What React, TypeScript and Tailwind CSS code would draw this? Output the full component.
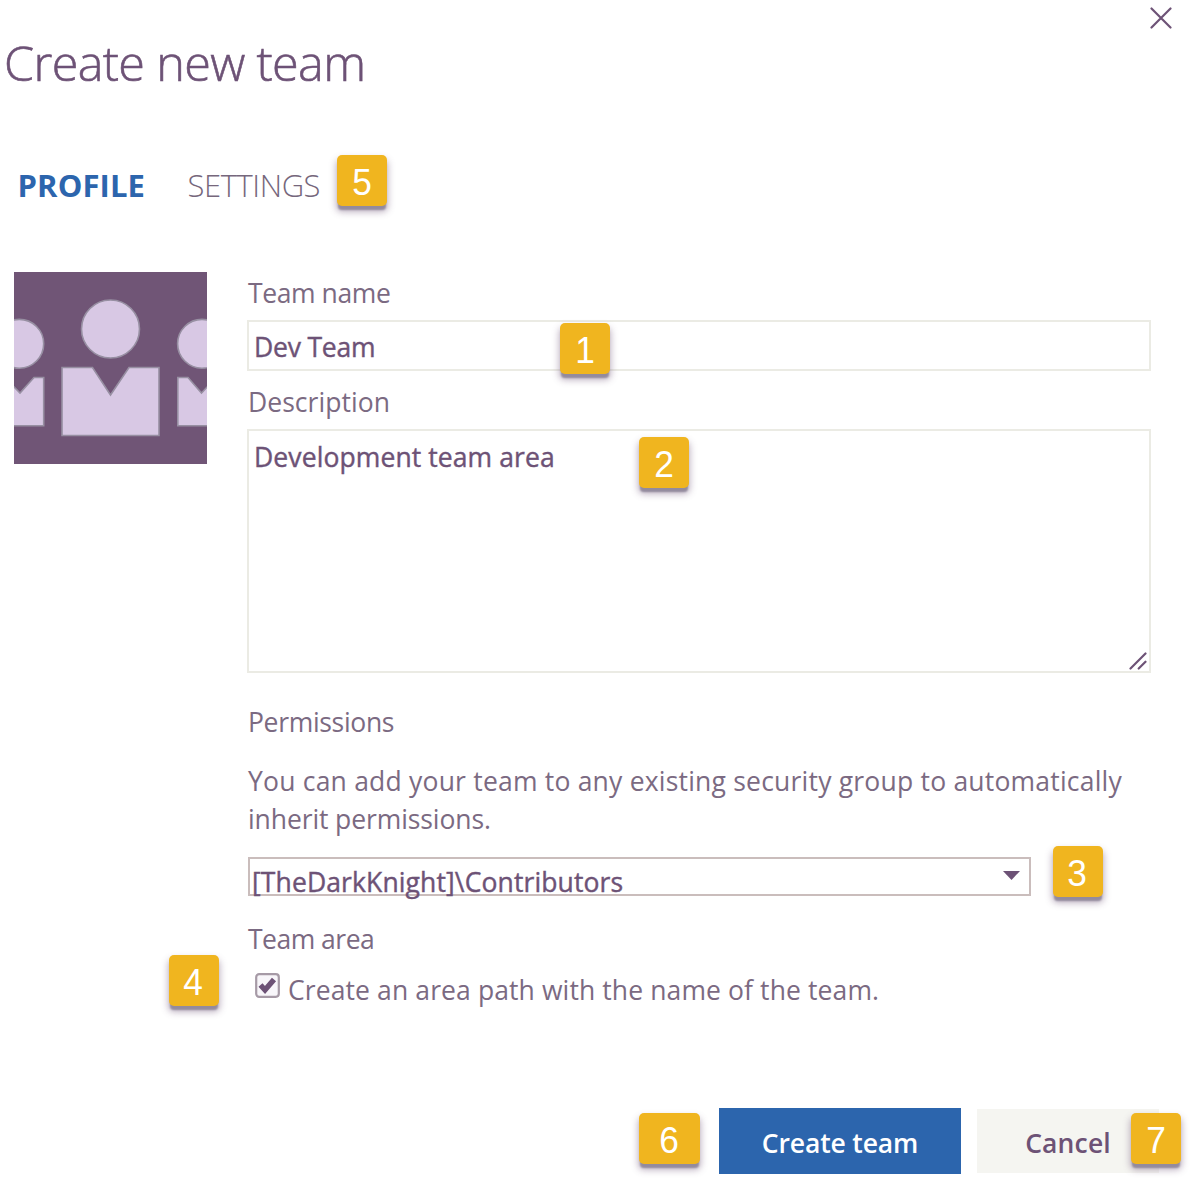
import type { ReactNode } from "react";

function Badge({ n, className }: { n: number; className: string }) {
  return (
    <span
      className={`flex h-[51px] items-center justify-center rounded-[5px] bg-[#f0b51f] font-['Liberation_Sans',sans-serif] text-[36px] leading-[51px] text-white shadow-[0_5px_2px_-1px_#938b9d,0_5px_7px_1px_rgba(112,86,122,0.45)] ${className}`}
    >
      <span className="translate-y-[2px] scale-x-[0.98]">{n}</span>
    </span>
  );
}

function Label({ children, className }: { children: ReactNode; className: string }) {
  return <div className={`h-[40px] whitespace-nowrap leading-[42px] ${className}`}>{children}</div>;
}

function TeamAvatar() {
  return (
    <svg width="193" height="192" viewBox="14 272 193 192" className="shrink-0 bg-[#705576]">
      <g fill="#d8c8e4" stroke="#978fa2" strokeWidth="1.6">
        <circle cx="110.5" cy="329" r="29" />
        <path d="M62 367.5H92.5L110.5 395L129 367.5H159V435.5H62Z" />
        <circle cx="19.3" cy="343.8" r="24.4" />
        <path d="M5 377.5L20 393L34 377.5H43.7V425.7H5Z" />
        <circle cx="202" cy="343.8" r="24.4" />
        <path d="M177.8 377.5H188L201.5 393L216 377.5V425.7H177.8Z" />
      </g>
    </svg>
  );
}

export default function App() {
  return (
    <main className="h-[1192px] w-[1200px] overflow-hidden bg-white font-['Open_Sans',sans-serif] text-[26.5px] text-[#7b6a82]">
      <header className="flex h-[155px] justify-between">
        <h1 className="whitespace-nowrap pl-[4px] pt-[32px] text-[48.5px] font-light leading-[60px] tracking-[-0.65px] text-[#6d5276] [-webkit-text-stroke:0.6px_#6d5276]">
          Create new team
        </h1>
        <svg width="22" height="22" viewBox="0 0 22 22" className="mr-[28px] mt-[7px]" stroke="#6d5276" strokeWidth="2.2" strokeLinecap="round">
          <path d="M1.5 1.5L20.5 20.5M20.5 1.5L1.5 20.5" />
        </svg>
      </header>

      <nav className="flex h-[117px] items-start text-[31px] leading-[40px]">
        <span className="mt-[10px] w-[170px] pl-[17.5px] font-bold tracking-[0.1px] text-[#2c65ad]">PROFILE</span>
        <span className="mt-[10px] w-[167px] pl-[17.5px] font-light tracking-[-0.43px] text-[#76677c]">SETTINGS</span>
        <Badge n={5} className="w-[50px]" />
      </nav>

      <section className="flex pl-[14px]">
        <TeamAvatar />
        <div className="ml-[40px] w-[904px]">
          <Label className="pl-px tracking-[-0.4px]">Team name</Label>
          <div className="relative mt-[8px] h-[51px] border-2 border-[#ebebe4] pl-[5px] leading-[51px] tracking-[-0.2px] text-[#6d5276] [-webkit-text-stroke:0.4px_#6d5276]">
            Dev Team
            <Badge n={1} className="absolute left-[311px] top-px w-[50px] [-webkit-text-stroke:0]" />
          </div>
          <Label className="mt-[10px] pl-px tracking-[0.04px]">Description</Label>
          <div className="relative mt-[8px] h-[244px] border-2 border-[#ebebe4] pl-[5px] pt-[6px] leading-[40px] tracking-[0.1px] text-[#6d5276] [-webkit-text-stroke:0.4px_#6d5276]">
            Development team area
            <Badge n={2} className="absolute left-[390px] top-[6px] w-[50px] [-webkit-text-stroke:0]" />
            <svg width="18" height="18" viewBox="0 0 18 18" className="absolute bottom-px right-[2px]" stroke="#6d5276" strokeWidth="2.2" strokeLinecap="round">
              <path d="M1.5 16.5L16.5 1.5M9.7 16.5L16.5 9.7" />
            </svg>
          </div>

          <Label className="mt-[28px] pl-px tracking-[-0.32px]">Permissions</Label>
          <p className="mt-[19px] h-[78px] whitespace-nowrap pt-[2px] leading-[38px]">
            <span className="block pl-px tracking-[0.21px]">You can add your team to any existing security group to automatically</span>
            <span className="block pl-px tracking-[-0.1px]">inherit permissions.</span>
          </p>
          <div className="mt-[19px] flex">
            <div className="ml-px flex h-[39px] w-[783px] justify-between border-2 border-[#cabdbc] pl-[2px] leading-[47px] tracking-[0.12px] text-[#6d5276]">
              <span className="[-webkit-text-stroke:0.4px_#6d5276]">[TheDarkKnight]\Contributors</span>
              <svg width="17" height="9" viewBox="0 0 17 9" className="mr-[9px] mt-[12px]" fill="#6d5276">
                <path d="M0 0H17L8.5 9Z" />
              </svg>
            </div>
            <Badge n={3} className="-mb-px -mt-[11px] ml-[21.5px] w-[50px]" />
          </div>
          <Label className="mt-[22px] pl-px tracking-[-0.5px]">Team area</Label>
          <div className="relative mt-[11px] flex pl-[8px]">
            <Badge n={4} className="absolute -left-[78.5px] -top-[14px] w-[50px]" />
            <svg width="25" height="25" viewBox="0 0 25 25" fill="none" className="mt-[4px]">
              <rect x="1.2" y="1.2" width="22.6" height="22.6" rx="3" fill="#f8f6fa" stroke="#a69aa6" strokeWidth="2.2" />
              <path d="M5.5 12L10 17L19 6.5" stroke="#6d5276" strokeWidth="5.4" />
            </svg>
            <Label className="ml-[8px] tracking-[0.11px]">Create an area path with the name of the team.</Label>
          </div>
        </div>
      </section>

      <footer className="mt-[99px] flex h-[66px] pl-[639px] font-semibold">
        <Badge n={6} className="mt-[5px] w-[61px] font-normal" />
        <button className="ml-[19px] h-[66px] w-[242px] bg-[#2c65ad] pt-[6px] tracking-[-0.15px] text-white">Create team</button>
        <button className="ml-[16px] mt-px h-[64px] w-[182px] bg-[#f5f5f1] pt-[6px] tracking-[0.15px] text-[#6d5276]">Cancel</button>
        <Badge n={7} className="relative -ml-[28px] mt-[5px] w-[50px] font-normal" />
      </footer>
    </main>
  );
}
